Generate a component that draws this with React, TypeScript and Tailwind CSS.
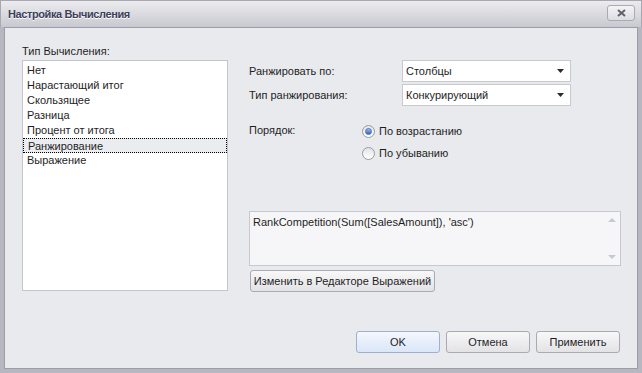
import React from 'react';

const items = [
  'Нет',
  'Нарастающий итог',
  'Скользящее',
  'Разница',
  'Процент от итога',
  'Ранжирование',
  'Выражение',
];

const Combo: React.FC<{ value: string }> = ({ value }) => (
  <div className="w-[169px] h-[22px] bg-white border border-[#c8c9ce] flex items-center pl-[3px] pr-[6px]">
    <span className="flex-1">{value}</span>
    <svg width="7" height="4" viewBox="0 0 7 4">
      <path d="M0 0 H7 L3.5 4 Z" fill="#2b2b2b" />
    </svg>
  </div>
);

const Radio: React.FC<{ checked?: boolean; label: string }> = ({ checked, label }) => (
  <div className="h-[22px] flex items-center gap-[4px]">
    <div className="w-[13px] h-[13px] rounded-full border border-[#9a9ba3] bg-gradient-to-b from-[#e3e3e8] to-[#ffffff] flex items-center justify-center">
      {checked && (
        <div className="w-[7px] h-[7px] rounded-full bg-gradient-to-b from-[#9dbdf0] to-[#2f63c0] border border-[#4a6fb4]"></div>
      )}
    </div>
    <span>{label}</span>
  </div>
);

const Button: React.FC<{ label: string; primary?: boolean; className?: string }> = ({
  label,
  primary,
  className = '',
}) => (
  <div
    className={`h-[22px] rounded-[3px] border flex items-center justify-center whitespace-nowrap ${
      primary
        ? 'border-[#9fb0cc] bg-gradient-to-b from-[#f4f7fd] to-[#dbe6f8]'
        : 'border-[#a9aab2] bg-gradient-to-b from-[#f8f8f9] to-[#e3e3e6]'
    } ${className}`}
  >
    {label}
  </div>
);

export default function App() {
  return (
    <div
      className="w-[642px] h-[373px] flex flex-col bg-[#b6b7c0] text-[11px] text-[#1e1e1e]"
      style={{ fontFamily: '"Liberation Sans", Arial, sans-serif' }}
    >
      {/* Title bar */}
      <div className="h-[27px] flex items-center justify-between px-[7px] bg-gradient-to-b from-[#ececef] to-[#c8c9d0] border-t border-x border-[#a7a8b1]">
        <span className="font-bold text-[11px] tracking-[-0.4px] text-[#3e3f5c] [text-shadow:0_1px_0_#ffffff]">
          Настройка Вычисления
        </span>
        <div className="w-[28px] h-[16px] -mt-[2px] mr-[-1px] rounded-[3px] border border-[#a9aab2] bg-gradient-to-b from-[#f4f4f6] to-[#dcdde2] flex items-center justify-center">
          <svg width="9" height="8" viewBox="0 0 9 8">
            <path d="M1 1 L8 7 M8 1 L1 7" stroke="#606068" strokeWidth="2" />
          </svg>
        </div>
      </div>

      {/* Body */}
      <div className="flex-1 mx-[4px] mb-[4px] border border-[#9c9da6] bg-[#e9eaee] flex flex-col pl-[17px] pr-[16px] pt-[16px] pb-[15px]">
        <div className="flex gap-[21px]">
          {/* Left column */}
          <div className="w-[206px] flex flex-col">
            <div className="h-[16px] leading-[14px]">Тип Вычисления:</div>
            <div className="h-[231px] bg-white border border-[#c5c6cb] pt-[2px]">
              {items.map((item) => {
                const selected = item === 'Ранжирование';
                return (
                  <div
                    key={item}
                    className={`h-[15px] leading-[14px] pl-[4px] ${
                      selected ? 'bg-[#ebecef] border border-dotted border-black pl-[3px] leading-[13px]' : ''
                    }`}
                  >
                    {item}
                  </div>
                );
              })}
            </div>
          </div>

          {/* Right column */}
          <div className="flex-1 flex flex-col pt-[16px]">
            <div className="flex items-center">
              <span className="w-[153px]">Ранжировать по:</span>
              <Combo value="Столбцы" />
            </div>
            <div className="flex items-center mt-[2px]">
              <span className="w-[153px]">Тип ранжирования:</span>
              <Combo value="Конкурирующий" />
            </div>

            <div className="flex mt-[14px]">
              <span className="w-[113px] h-[22px] leading-[20px]">Порядок:</span>
              <div className="flex flex-col">
                <Radio checked label="По возрастанию" />
                <Radio label="По убыванию" />
              </div>
            </div>

            <div className="mt-[47px] h-[55px] border border-[#c8c9ce] bg-[#f6f6f8] flex">
              <div className="flex-1 pl-[3px] pt-[2px]">RankCompetition(Sum([SalesAmount]), 'asc')</div>
              <div className="w-[17px] flex flex-col items-center justify-between py-[6px]">
                <svg width="8" height="4" viewBox="0 0 8 4">
                  <path d="M0 4 L4 0 L8 4 Z" fill="#c8c9ce" />
                </svg>
                <svg width="8" height="4" viewBox="0 0 8 4">
                  <path d="M0 0 L8 0 L4 4 Z" fill="#c8c9ce" />
                </svg>
              </div>
            </div>

            <div className="mt-[4px] flex">
              <Button label="Изменить в Редакторе Выражений" className="w-[185px] ml-[1px]" />
            </div>
          </div>
        </div>

        {/* Footer buttons */}
        <div className="mt-auto flex justify-end gap-[6px] pr-[1px]">
          <Button primary label="OK" className="w-[84px]" />
          <Button label="Отмена" className="w-[84px]" />
          <Button label="Применить" className="w-[84px]" />
        </div>
      </div>
    </div>
  );
}
